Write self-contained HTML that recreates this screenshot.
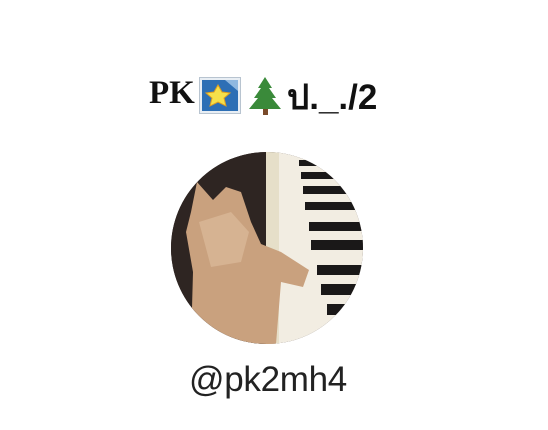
<!DOCTYPE html>
<html><head><meta charset="utf-8"><style>
html,body{margin:0;padding:0;background:#fff;width:548px;height:430px;overflow:hidden;position:relative}
.t{position:absolute;top:74px;left:0;width:548px;height:42px}
.u{position:absolute;left:189px;top:360px;font:35px "Liberation Sans",sans-serif;color:#222;letter-spacing:-0.3px;white-space:nowrap}
</style></head><body>
<div class="t">
<span style="position:absolute;left:149px;top:1px;font:bold 33px 'Liberation Serif',serif;color:#111">PK</span>
<svg style="position:absolute;left:199px;top:3px" width="42" height="37" viewBox="0 0 42 37">
<rect x="0.5" y="0.5" width="41" height="36" fill="#e8eef4" stroke="#b8c4d0"/>
<rect x="3" y="3" width="36" height="31" fill="#2d6fb5"/>
<path d="M26 3 L39 3 L39 14 Z" fill="#8fb8e0"/>
<polygon points="19,8 23,15 31,16 25,21 27,29 19,25 11,29 13,21 7,16 15,15" fill="#f5e04a" stroke="#e0a020"/>
</svg>
<svg style="position:absolute;left:246px;top:2px" width="38" height="40" viewBox="0 0 38 40">
<rect x="17" y="32" width="5" height="7" fill="#7a4a2a"/>
<polygon points="19,1 26,12 23,12 30,22 26,22 35,33 3,33 12,22 8,22 15,12 12,12" fill="#3a8a3a"/>
</svg>
<span style="position:absolute;left:287px;top:-4px;font:bold 35px 'Liberation Sans','Noto Sans CJK SC',sans-serif;color:#111">ป._./2</span>
</div>
<svg style="position:absolute;left:171px;top:152px" width="192" height="192" viewBox="0 0 192 192">
<defs><clipPath id="c"><circle cx="96" cy="96" r="96"/></clipPath></defs>
<g clip-path="url(#c)">
<rect width="192" height="192" fill="#3a2e2a"/>
<rect x="0" y="0" width="95" height="192" fill="#2e2522"/>
<rect x="95" y="0" width="15" height="192" fill="#e6dfc9"/>
<rect x="108" y="0" width="90" height="192" fill="#f2ede2"/>
<g fill="#1a1818">
<rect x="128" y="8" width="70" height="6"/><rect x="130" y="20" width="70" height="7"/>
<rect x="132" y="34" width="70" height="8"/><rect x="134" y="50" width="70" height="8"/>
<rect x="138" y="70" width="70" height="9"/><rect x="140" y="88" width="70" height="10"/>
<rect x="146" y="113" width="70" height="10"/><rect x="150" y="132" width="70" height="11"/>
<rect x="156" y="152" width="70" height="11"/>
</g>
<path d="M20 60 L26 30 L42 48 L55 35 L70 40 L80 70 L90 92 L110 100 L138 118 L132 135 L110 130 L105 192 L20 192 L22 120 L15 80 Z" fill="#c9a17e"/>
<path d="M28 70 L60 60 L78 80 L70 110 L40 115 Z" fill="#d6b392"/>
</g>
</svg>
<div class="u">@pk2mh4</div>
</body></html>
